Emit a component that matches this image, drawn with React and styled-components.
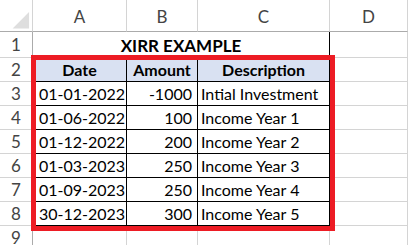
import React from 'react';
import styled, { createGlobalStyle } from 'styled-components';

const GlobalStyle = createGlobalStyle`
  body {
    margin: 0;
    background: #ffffff;
    overflow: hidden;
    font-family: Lato, "Liberation Sans", sans-serif;
  }
`;

const rows = [
  { date: '01-01-2022', amount: '-1000', desc: 'Intial Investment' },
  { date: '01-06-2022', amount: '100', desc: 'Income Year 1' },
  { date: '01-12-2022', amount: '200', desc: 'Income Year 2' },
  { date: '01-03-2023', amount: '250', desc: 'Income Year 3' },
  { date: '01-09-2023', amount: '250', desc: 'Income Year 4' },
  { date: '30-12-2023', amount: '300', desc: 'Income Year 5' },
];

function App() {
  return (
    <>
      <GlobalStyle />
      <Sheet>
        <Corner>
          <svg width="33" height="32" viewBox="0 0 33 32">
            <polygon points="13,29 30,12 30,29" fill="#dedede" />
          </svg>
        </Corner>
        {['A', 'B', 'C', 'D'].map((c) => (
          <ColHead key={c}>{c}</ColHead>
        ))}

        <RowHead>1</RowHead>
        <Title>XIRR EXAMPLE</Title>
        <Cell />

        <RowHead>2</RowHead>
        <HeadCell>Date</HeadCell>
        <HeadCell>Amount</HeadCell>
        <HeadCell>Description</HeadCell>
        <Cell />

        {rows.map((r, i) => (
          <React.Fragment key={r.date}>
            <RowHead>{i + 3}</RowHead>
            <DataCell>{r.date}</DataCell>
            <DataCell $right>{r.amount}</DataCell>
            <DataCell $pad="3px">{r.desc}</DataCell>
            <Cell />
          </React.Fragment>
        ))}

        <RowHead>9</RowHead>
        <Cell />
        <Cell />
        <Cell />
        <Cell />

        <Highlight />
      </Sheet>
    </>
  );
}

const Sheet = styled.div`
  position: relative;
  display: grid;
  grid-template-columns: 33px 94px 71px 132px 78px;
  grid-template-rows: 32px 26px repeat(8, 24px);
  width: 408px;
  height: 245px;
  overflow: hidden;
  font-size: 16px;
  color: #000;
`;

const Corner = styled.div`
  display: flex;
  border-right: 1px solid #d4d4d4;
  border-bottom: 1px solid #ababab;
  box-sizing: border-box;
`;

const ColHead = styled.div`
  display: flex;
  align-items: center;
  justify-content: center;
  padding-top: 1px;
  border-right: 1px solid #d4d4d4;
  border-bottom: 1px solid #ababab;
  box-sizing: border-box;
  color: #444;
  font-size: 17px;
`;

const RowHead = styled.div`
  display: flex;
  align-items: center;
  justify-content: center;
  border-right: 1px solid #ababab;
  border-bottom: 1px solid #d4d4d4;
  box-sizing: border-box;
  color: #444;
  font-size: 17px;
`;

const Cell = styled.div`
  border-right: 1px solid #d4d4d4;
  border-bottom: 1px solid #d4d4d4;
  box-sizing: border-box;
`;

const Title = styled.div`
  grid-column: span 3;
  display: flex;
  align-items: center;
  justify-content: center;
  border-right: 1px solid #000;
  box-sizing: border-box;
  font-weight: 700;
  font-size: 17px;
`;

const HeadCell = styled.div`
  display: flex;
  align-items: center;
  justify-content: center;
  background: #d9e1f2;
  border-right: 1px solid #000;
  border-bottom: 1px solid #000;
  box-sizing: border-box;
  font-weight: 700;
`;

const DataCell = styled.div`
  display: flex;
  align-items: center;
  justify-content: ${(p) => (p.$right ? 'flex-end' : 'flex-start')};
  padding: ${(p) => (p.$right ? '0 5px 0 0' : `0 0 0 ${p.$pad || '6px'}`)};
  border-right: 1px solid #000;
  border-bottom: 1px solid #000;
  box-sizing: border-box;
  white-space: nowrap;
`;

const Highlight = styled.div`
  position: absolute;
  left: 31px;
  top: 55px;
  width: 304px;
  height: 176px;
  border: 5px solid #ed1c24;
  box-sizing: border-box;
  pointer-events: none;
`;

export default App;
